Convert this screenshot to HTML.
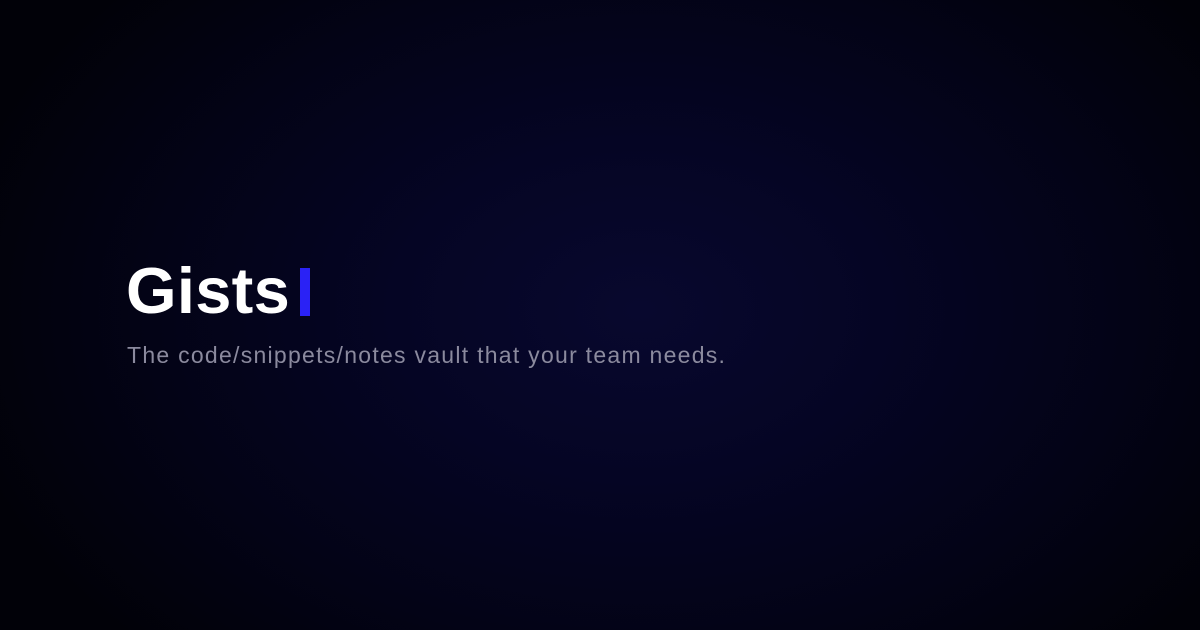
<!DOCTYPE html>
<html><head><style>
html,body{margin:0;padding:0}
body{width:1200px;height:630px;overflow:hidden;position:relative;
background:radial-gradient(ellipse 700px 480px at 640px 310px,#08082e 0%,#050524 35%,#030316 70%,#010108 100%);
font-family:"Liberation Sans",sans-serif}
.t{position:absolute;left:126px;top:253px;font-size:65px;font-weight:bold;color:#fff;letter-spacing:0.3px;line-height:76px}
.c{position:absolute;left:300px;top:268px;width:10px;height:48px;background:#2a22f5}
.s{position:absolute;left:127px;top:340px;font-size:23px;color:#8b8a9e;line-height:30px;letter-spacing:1.27px}
</style></head><body>
<div class="t">Gists</div><div class="c"></div>
<div class="s">The code/snippets/notes vault that your team needs.</div>
</body></html>
